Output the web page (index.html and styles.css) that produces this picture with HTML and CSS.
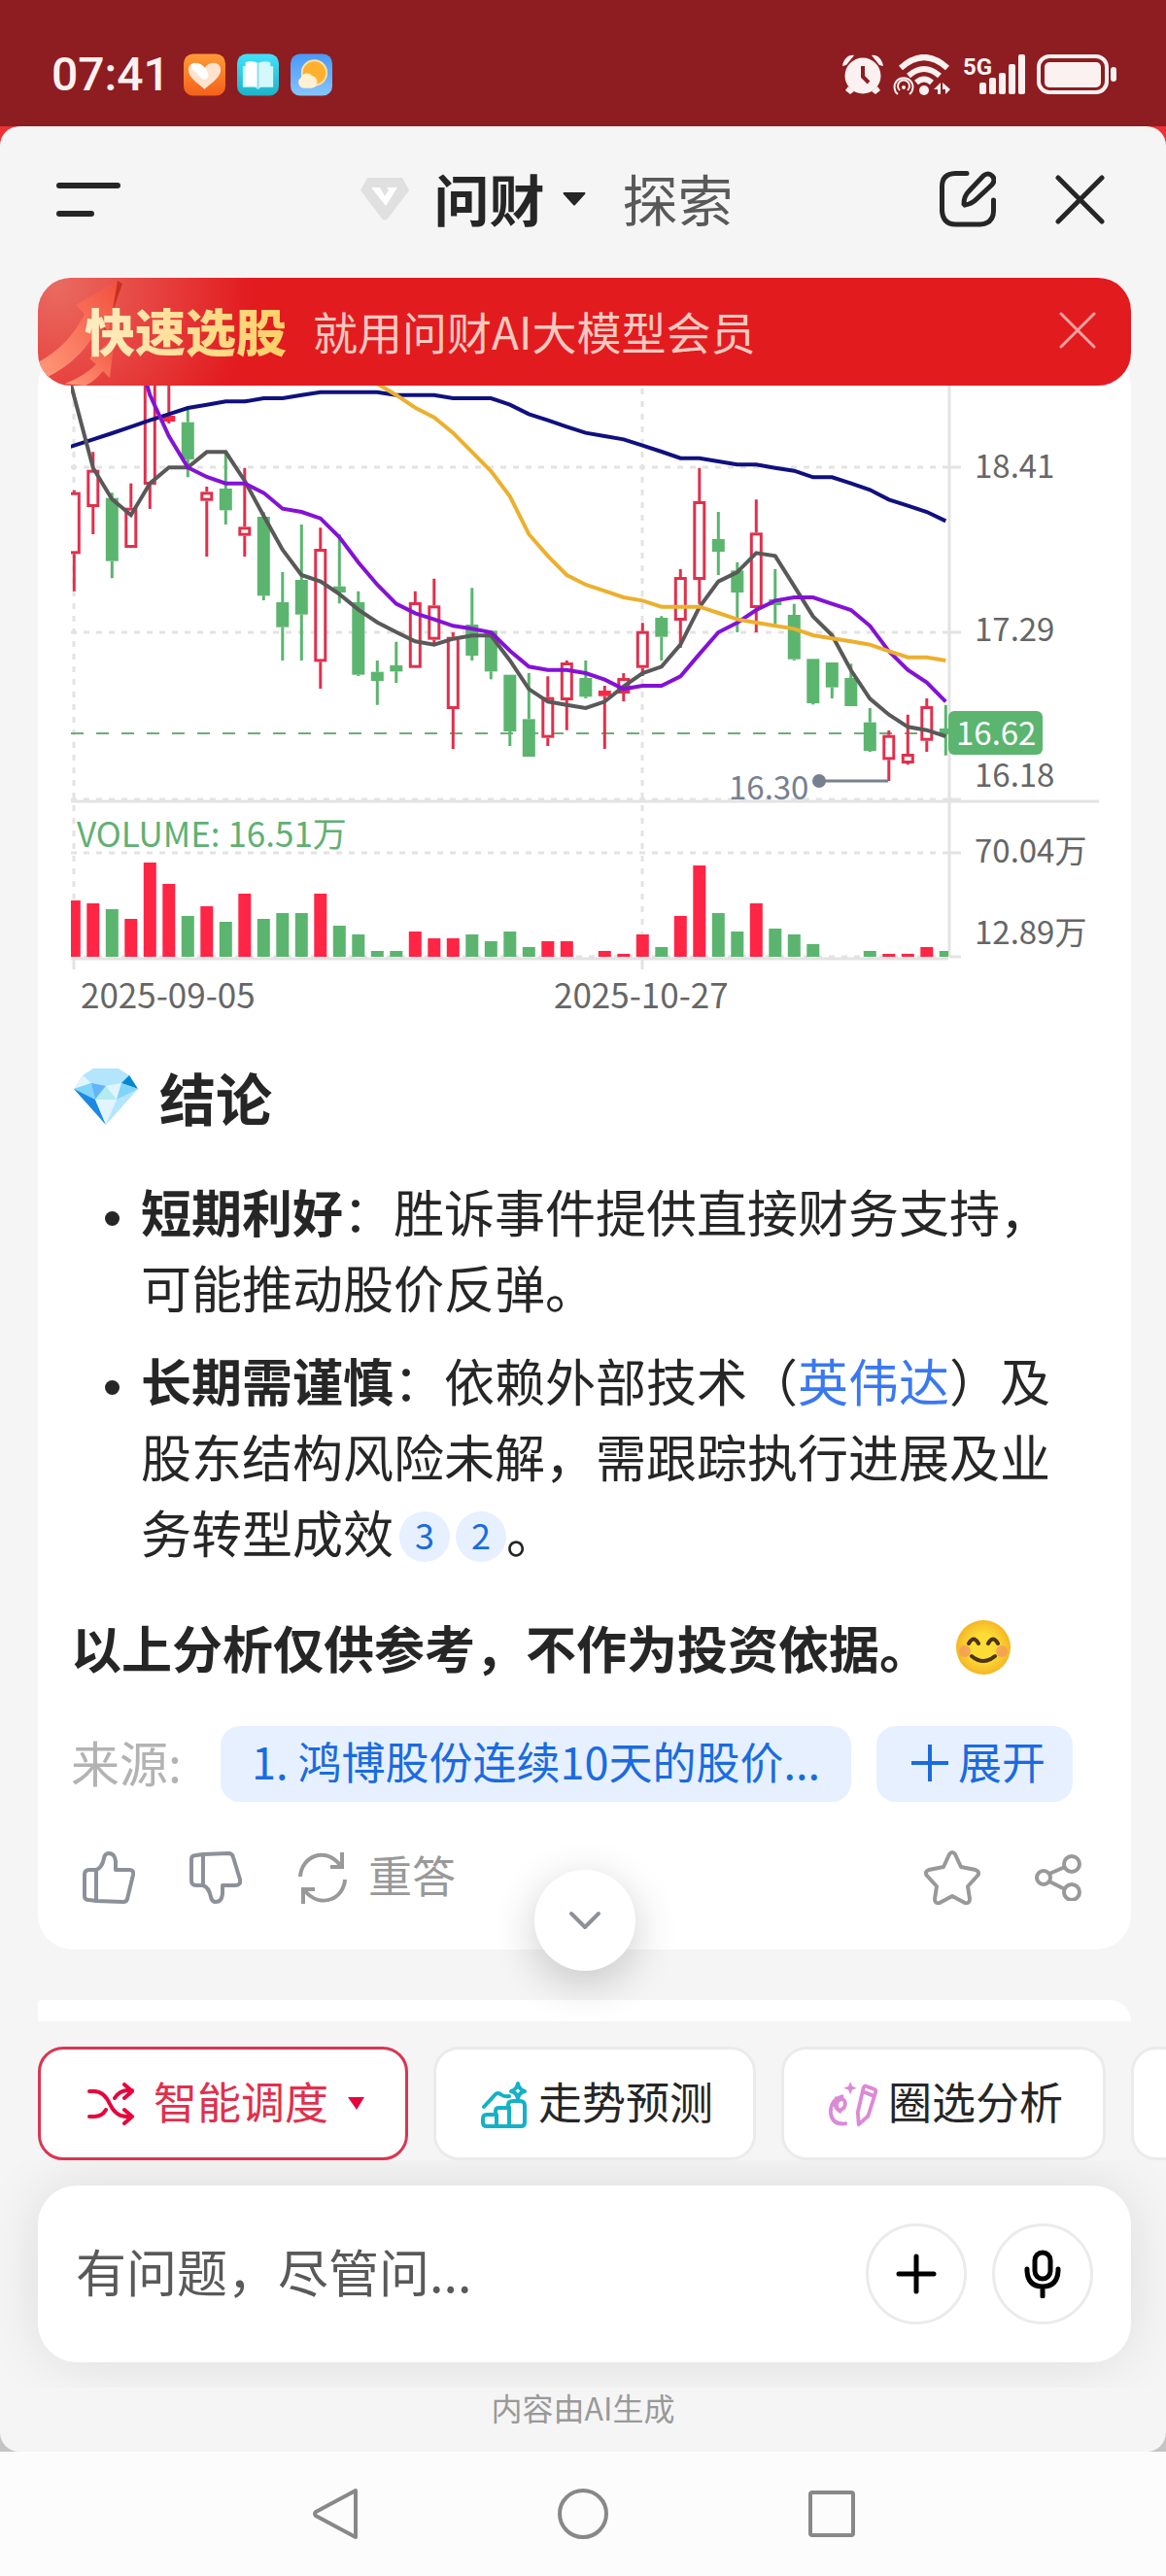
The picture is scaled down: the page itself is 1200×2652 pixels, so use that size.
FILE: index.html
```
<!DOCTYPE html>
<html lang="zh-CN">
<head>
    <meta charset="UTF-8">
    <meta name="viewport" content="width=device-width, initial-scale=1.0">
    <title>问财</title>
    <link rel="stylesheet" href="styles.css">
</head>
<body>
    <div class="status-bar">
        <span class="time">07:41</span>
        <svg class="app-icon" viewBox="0 0 44 44">
            <defs>
                <linearGradient id="orange" x1="0" y1="0" x2="0" y2="1"><stop offset="0" stop-color="#ff9a35"/><stop offset="1" stop-color="#f4611a"/></linearGradient>
                <linearGradient id="cyan" x1="0" y1="0" x2="0" y2="1"><stop offset="0" stop-color="#42e2fb"/><stop offset="1" stop-color="#1fb2c8"/></linearGradient>
                <linearGradient id="sky" x1="0" y1="0" x2="0" y2="1"><stop offset="0" stop-color="#4799f7"/><stop offset="1" stop-color="#86c4ff"/></linearGradient>
            </defs>
            <rect width="44" height="44" rx="10" fill="url(#orange)"/>
            <path d="M22 37C13 30 5 24 5 17c0-9 12-10 17-2 5-8 17-7 17 2 0 7-8 13-17 20z" fill="#ffe3cf"/>
            <path d="M8 11c7-4 17 3 18 11 0 6-6 6-9 2-4-5-9-6-9-13z" fill="#fff"/>
        </svg>
        <svg class="app-icon" viewBox="0 0 44 44">
            <rect width="44" height="44" rx="10" fill="url(#cyan)"/>
            <path d="M6 13h3V9c5-2 10-1 13 1 3-2 8-3 13-1v4h3v22H25l-3 2-3-2H6z" fill="#d5f8fc"/>
            <path d="M9 9c5-2 10-1 13 1v25c-4-2-9-2-13-1z" fill="#fff"/>
            <path d="M22 10v27" stroke="#8adfea" stroke-width="2"/>
        </svg>
        <svg class="app-icon" viewBox="0 0 44 44">
            <rect width="44" height="44" rx="10" fill="url(#sky)"/>
            <circle cx="25" cy="20" r="13" fill="#ffb02e" stroke="#ffe0a0" stroke-width="2"/>
            <path d="M14 36a6 6 0 0 1-3-11 7 7 0 0 1 12-2 7 7 0 0 1 5 7c0 4-3 6-6 6z" fill="#fff1d2"/>
        </svg>
        <div class="status-right">
            <svg width="42" height="42" viewBox="0 0 42 42" fill="#fbf1f1">
                <circle cx="21" cy="22" r="18.500"/>
                <path d="M0 12C1 5 6 0 12 1L4 11zM42 12C41 5 36 0 30 1l8 10zM6 33l6 5-4 3-5-4zM36 33l-6 5 4 3 5-4z"/>
                <path d="M21 12v11l6 6" fill="none" stroke="#8d1d20" stroke-width="4"/>
            </svg>
            <svg width="60" height="42" viewBox="0 0 60 42" fill="none" stroke="#fbf1f1" stroke-width="6">
                <path d="M8 14q24-22 48 0M16 22q16-14 32 0M24 29q8-7 16 0"/>
                <circle cx="32" cy="37" r="5" fill="#fbf1f1" stroke="none"/>
                <g stroke-width="2"><path d="M5 41a9.500 9.500 0 1 1 12 0M7 37a6 6 0 1 1 8 0"/><circle cx="11" cy="34" r="1"/></g>
                <path d="M42 36l7-7v12h-3v-5zM51 29l8 7-5 5V36h-3z" fill="#fbf1f1" stroke="none"/>
            </svg>
            <svg width="68" height="42" viewBox="0 0 68 42" fill="#fbf1f1">
                <text class="net" x="2" y="21">5G</text>
                <rect x="19" y="29" width="7" height="12" rx="2"/><rect x="29" y="24" width="7" height="17" rx="2"/><rect x="39" y="19" width="7" height="22" rx="2"/><rect x="49" y="10" width="7" height="31" rx="2"/><rect x="59" y="0" width="7" height="41" rx="2"/>
            </svg>
            <svg width="82" height="42" viewBox="0 0 82 42" fill="#fbf1f1">
                <rect x="2" y="2" width="70" height="37" rx="11" fill="none" stroke="#fbf1f1" stroke-width="4"/>
                <rect x="8" y="8" width="58" height="26" rx="5"/><rect x="76" y="13" width="6" height="15" rx="3"/>
            </svg>
        </div>
    </div>

    <main class="panel">
        <header class="top-bar">
            <button class="icon-btn" aria-label="菜单">
                <svg width="66" height="37" viewBox="0 0 66 37" stroke="#262626" stroke-width="6" stroke-linecap="round"><path d="M3 4h60M3 33h33"/></svg>
            </button>
            <nav class="tabs">
                <svg width="50" height="44" viewBox="0 0 50 44"><path d="M7 0h36l7 13-22 29q-3 3-6 0L0 13z" fill="#e0e0e0"/><path d="M11 10h9l5 9 4-6-2-3h11L26 29z" fill="#fff"/></svg>
                <a href="#" class="tab current">问财</a>
                <svg width="24" height="14" viewBox="0 0 24 14"><path d="M1 0h22q1 1 0 2L13 13q-1 1-2 0L1 2q-1-1 0-2z" fill="#262626"/></svg>
                <a href="#" class="tab">探索</a>
            </nav>
            <div class="top-actions">
                <button class="icon-btn" aria-label="新对话">
                    <svg width="58" height="58" viewBox="0 0 58 58" fill="none" stroke="#262626" stroke-width="5" stroke-linecap="round"><path d="M28 2.500H16Q2.500 3 2.500 16v25q1 14 14 14h25q14-1 14-14V30"/><path d="M25 34q0-8 5-13L45 5q5-4 9 0 4 4 0 9L38 29q-5 5-12 6z"/></svg>
                </button>
                <button class="icon-btn" aria-label="关闭">
                    <svg width="51" height="51" viewBox="0 0 51 51" stroke="#262626" stroke-width="5" stroke-linecap="round"><path d="M3 3l45 45M48 3L3 48"/></svg>
                </button>
            </div>
        </header>

        <section class="feed">
            <div class="banner">
                <svg class="banner-arrows" width="130" height="111" viewBox="0 0 130 111">
                    <defs><linearGradient id="arrow" x1="0" y1="1" x2="1" y2="0"><stop offset="0" stop-color="#ff9a7a"/><stop offset="1" stop-color="#f2503e"/></linearGradient></defs>
                    <path d="M6 104Q50 78 62 46l8 8L87 6l-5-3z" fill="#c7321f"/>
                    <path d="M0 87Q32 70 48 37l-9-9L82 3 73 56l-9-10Q48 84 8 103z" fill="url(#arrow)"/>
                    <path d="M28 109q20-8 32-20l-7-6 26-22-5 42-7-7q-8 10-18 15z" fill="url(#arrow)"/>
                </svg>
                <strong>快速选股</strong>
                <span>就用问财AI大模型会员</span>
                <button class="icon-btn banner-close" aria-label="关闭广告">
                    <svg width="38" height="38" viewBox="0 0 38 38" stroke="#f4a3a0" stroke-width="3" stroke-linecap="round"><path d="M2 2l34 34M36 2L2 36"/></svg>
                </button>
            </div>

            <article class="card">
                <svg class="chart" viewBox="0 0 1125 663" role="img" aria-label="K线图">
                    <defs>
                        <clipPath id="plot"><rect x="34" y="0" width="903" height="663"/></clipPath>
                        <clipPath id="priceArea"><rect x="0" y="0" width="1125" height="426"/></clipPath>
                    </defs>
                    <g class="grid">
                        <path class="dashed" d="M34 84H938M34 254H938M34 426H938M34 481H938M34 588H938M37 3V588M622 3V588"/>
                        <path d="M34 428H1092M34 590H937M938 0V588M938 84H950M938 254H950M938 426H950M938 481H950M938 588H950M37 590V601M622 590V601"/>
                    </g>
                    <path class="last-line" d="M34 358H937"/>
                    <g id="bars" clip-path="url(#plot)"></g>
                    <g id="lines" clip-path="url(#plot)"></g>
                    <g class="low-mark"><path d="M804 407H875"/><circle cx="804" cy="407" r="7"/><text x="711" y="426" clip-path="url(#priceArea)">16.30</text></g>
                    <rect class="last-tag" x="937" y="335" width="97" height="45" rx="6"/>
                    <text class="last-text" x="945" y="370">16.62</text>
                    <text x="964" y="95">18.41</text>
                    <text x="964" y="263">17.29</text>
                    <text x="964" y="413">16.18</text>
                    <text x="964" y="491">70.04万</text>
                    <text x="964" y="575">12.89万</text>
                    <text class="wide vol-text" x="40" y="475">VOLUME: 16.51万</text>
                    <text class="wide" x="44" y="641">2025-09-05</text>
                    <text class="wide" x="531" y="641">2025-10-27</text>
                </svg>

                <h2>
                    <svg width="66" height="58" viewBox="0 0 66 58">
                        <path d="M20 0h26l11 7 9 14-33 37L0 21 9 7z" fill="#b3e5fc"/>
                        <path d="M9 7L0 21l18-6z" fill="#e1f5fe"/><path d="M57 7l9 14-17-6z" fill="#0288d1"/>
                        <path d="M18 15L0 21l22 11z" fill="#81d4fa"/><path d="M18 15l15 3-11 14z" fill="#64b5f6"/><path d="M33 18l11 14H22z" fill="#b2ebf2"/><path d="M49 15L33 18l11 14z" fill="#e1f5fe"/><path d="M49 15l17 6-22 11z" fill="#81d4fa"/>
                        <path d="M0 21l22 11 11 26z" fill="#1e88e5"/><path d="M22 32h22L33 58z" fill="#e1f5fe"/>
                    </svg>
                    结论
                </h2>
                <ul>
                    <li><b>短期利好</b>：胜诉事件提供直接财务支持，可能推动股价反弹。</li>
                    <li><b>长期需谨慎</b>：依赖外部技术（<a href="#">英伟达</a>）及股东结构风险未解，需跟踪执行进展及业务转型成效<a href="#" class="cite">3</a><a href="#" class="cite">2</a>。</li>
                </ul>
                <p class="notice">以上分析仅供参考，不作为投资依据。
                    <svg width="58" height="58" viewBox="0 0 58 58">
                        <defs><radialGradient id="face"><stop offset="0.500" stop-color="#fddc35"/><stop offset="1" stop-color="#f5b625"/></radialGradient></defs>
                        <circle cx="29" cy="29" r="28" fill="url(#face)"/>
                        <circle cx="10" cy="33" r="6" fill="#f59a5c" opacity=".8"/><circle cx="48" cy="33" r="6" fill="#f59a5c" opacity=".8"/>
                        <path d="M14 25q5-9 10 0M34 25q5-9 10 0M17 38q12 10 24 0" fill="none" stroke="#4e3318" stroke-width="4" stroke-linecap="round"/>
                    </svg>
                </p>
                <div class="sources">
                    <span>来源:</span>
                    <a href="#" class="pill">1. 鸿博股份连续10天的股价...</a>
                    <button class="pill more"><svg width="38" height="38" viewBox="0 0 38 38" stroke="#1a6be0" stroke-width="4"><path d="M0 19h38M19 0v38"/></svg>展开</button>
                </div>
                <div class="actions">
                    <button class="icon-btn" aria-label="赞">
                        <svg width="54" height="54" viewBox="0 0 54 54" fill="none" stroke="#8c9199" stroke-width="4" stroke-linejoin="round"><path d="M14 19H7q-5 0-5 5v22q0 4 5 4l7 1 28 1q3 0 4-3l6-25q1-5-4-5H34V10q-1-8-7-8-4 0-5 5-2 10-8 12zM14 19v32"/></svg>
                    </button>
                    <button class="icon-btn" aria-label="踩">
                        <svg width="54" height="54" viewBox="0 0 54 54" fill="none" stroke="#8c9199" stroke-width="4" stroke-linejoin="round"><path d="M14 35H7q-5 0-5-5V8q0-4 5-4l7-1 26-1q4 0 5 4l7 23q1 6-5 6H34v9q-1 8-7 8-4 0-5-5-2-10-8-12zM14 35V3"/></svg>
                    </button>
                    <button class="icon-btn redo">
                        <svg width="50" height="54" viewBox="0 0 50 54" fill="none" stroke="#999" stroke-width="4"><path d="M2 26C3 6 27-6 43 14M45 1v15H33M48 29C47 48 24 60 7 41M5 54V39h12"/></svg>
                        <span>重答</span>
                    </button>
                    <div class="actions-right">
                        <button class="icon-btn" aria-label="收藏">
                            <svg width="58" height="56" viewBox="0 0 58 56" fill="none" stroke="#999" stroke-width="4" stroke-linejoin="round"><path d="M26 4q3-4 6 0l6 13 15 3q5 2 2 6L45 37l2 13q0 5-5 4l-13-7-13 7q-5 1-5-4l2-13L3 26q-3-4 2-6l15-3z"/></svg>
                        </button>
                        <button class="icon-btn" aria-label="分享">
                            <svg width="48" height="48" viewBox="0 0 48 48" fill="none" stroke="#999" stroke-width="4"><circle cx="9" cy="24" r="7"/><circle cx="38" cy="10" r="8"/><circle cx="38" cy="39" r="8"/><path d="M15 20l16-7M15 28l16 8"/></svg>
                        </button>
                    </div>
                </div>
                <button class="to-bottom" aria-label="回到底部">
                    <svg width="34" height="20" viewBox="0 0 34 20" fill="none" stroke="#8c9199" stroke-width="4" stroke-linecap="round" stroke-linejoin="round"><path d="M3 3l14 14L31 3"/></svg>
                </button>
            </article>
            <div class="next-card"></div>
        </section>

        <div class="chips">
            <button class="chip active">
                <svg width="48" height="44" viewBox="0 0 48 44" fill="none" stroke="#e6053c" stroke-width="4" stroke-linecap="round" stroke-linejoin="round"><path d="M2 9h5Q17 9 23 22t17 13h6M2 35h5q8 0 12-7M28 16q5-8 14-8h4M38 2l8 7-8 7M38 28l8 7-8 7"/></svg>
                <span>智能调度</span>
                <svg width="17" height="13" viewBox="0 0 17 13"><path d="M0 0h17L9 13z" fill="#e6053c"/></svg>
            </button>
            <button class="chip">
                <svg width="48" height="50" viewBox="0 0 48 50" fill="none" stroke="#14b1c8" stroke-width="4" stroke-linejoin="round" stroke-linecap="round"><path d="M2 44v-4q0-4 4-4h9v-4q0-3 4-3h9v-3q0-4 5-4h7q5 0 5 5v17q0 4-4 4H6q-4 0-4-4zM16 36v12M29 28v20M3 28l12-13q2-2 5 0 4 3 9 2"/><path d="M38 4q1 6 7 8-6 1-7 8-1-7-7-8 6-2 7-8z"/></svg>
                <span>走势预测</span>
            </button>
            <button class="chip">
                <svg width="50" height="50" viewBox="0 0 52 50" fill="none" stroke="#db8ad6" stroke-width="4" stroke-linejoin="round" stroke-linecap="round"><path d="M14 17Q1 21 2 35q2 13 16 11M8 19c-3 8 0 13 5 12 6-2 6-12 0-11-5 1-7 9-1 13"/><path d="M40 6l8 3q3 1 2 4L42 38l-10 9-1-13L37 8q1-3 3-2zM37 12l10 4"/><path d="M23 1l2 5 5 2-5 2-2 5-2-5-5-2 5-2z" fill="#db8ad6" stroke="none"/></svg>
                <span>圈选分析</span>
            </button>
            <button class="chip" aria-label="更多"></button>
        </div>

        <div class="composer">
            <div class="input-box">
                <input type="text" placeholder="有问题，尽管问..." aria-label="提问">
                <button class="round-btn" aria-label="添加">
                    <svg width="42" height="42" viewBox="0 0 42 42" stroke="#000" stroke-width="5" stroke-linecap="round"><path d="M3 21h36M21 3v36"/></svg>
                </button>
                <button class="round-btn" aria-label="语音">
                    <svg width="40" height="50" viewBox="0 0 40 50" fill="none" stroke="#000" stroke-width="5" stroke-linecap="round"><rect x="12" y="3" width="16" height="27" rx="8"/><path d="M4 20v2q1 16 16 16t16-16v-2M20 38v10"/></svg>
                </button>
            </div>
        </div>
        <p class="footnote">内容由AI生成</p>
    </main>

    <div class="nav-bar">
        <button class="icon-btn" aria-label="返回"><svg width="52" height="54" viewBox="0 0 52 54" fill="none" stroke="#888" stroke-width="4" stroke-linejoin="round"><path d="M48 3v48L7 29q-2-2 0-4z"/></svg></button>
        <button class="icon-btn" aria-label="主页"><svg width="52" height="54" viewBox="0 0 52 54" fill="none" stroke="#888" stroke-width="4"><circle cx="26" cy="27" r="24"/></svg></button>
        <button class="icon-btn" aria-label="最近任务"><svg width="52" height="54" viewBox="0 0 52 54" fill="none" stroke="#888" stroke-width="4"><rect x="4" y="5" width="44" height="44" rx="2"/></svg></button>
    </div>

    <script>
        // one row per day: colour (r = hollow, R = solid red, g = green), high, body top, body bottom, low, volume
        // levels are counted down from the top of the plot, three to a unit
        var days = [
            ["r", 344, 350, 541, 656, 58], ["r", 226, 281, 396, 480, 55], ["g", 352, 368, 563, 616, 49],
            ["r", 323, 398, 522, 522, 39], ["r", 0, 0, 327, 402, 97], ["R", 0, 114, 132, 138, 75],
            ["g", 92, 134, 249, 304, 42], ["r", 333, 349, 377, 549, 52], ["g", 226, 339, 406, 450, 36],
            ["r", 275, 457, 485, 549, 65], ["g", 412, 426, 670, 684, 39], ["g", 597, 690, 767, 870, 45],
            ["g", 450, 621, 728, 870, 45], ["r", 460, 525, 874, 957, 65], ["g", 480, 641, 660, 694, 32],
            ["g", 656, 690, 914, 918, 23], ["g", 870, 905, 933, 1007, 6], ["g", 812, 885, 904, 939, 6],
            ["r", 656, 690, 893, 893, 26], ["r", 617, 700, 806, 822, 19], ["r", 783, 797, 1020, 1143, 19],
            ["g", 646, 759, 855, 870, 23], ["g", 778, 778, 904, 928, 16], ["g", 914, 914, 1089, 1134, 26],
            ["g", 909, 1051, 1167, 1167, 10], ["r", 919, 983, 1109, 1134, 16], ["r", 870, 876, 993, 1085, 16],
            ["g", 870, 924, 982, 987, 0], ["R", 948, 963, 980, 1143, 6], ["r", 909, 924, 972, 996, 3],
            ["r", 754, 779, 893, 918, 23], ["g", 733, 738, 797, 870, 10], ["r", 588, 612, 747, 831, 42],
            ["r", 275, 378, 621, 695, 94], ["g", 411, 495, 534, 606, 45], ["g", 567, 592, 660, 783, 26],
            ["r", 373, 475, 708, 783, 55], ["g", 588, 681, 699, 763, 29], ["g", 695, 729, 866, 870, 23],
            ["g", 865, 865, 1002, 1006, 13], ["g", 876, 876, 953, 987, 0], ["g", 880, 924, 1011, 1011, 0],
            ["g", 1017, 1061, 1149, 1152, 6], ["r", 1086, 1100, 1177, 1242, 3], ["r", 1037, 1158, 1188, 1192, 3],
            ["r", 987, 1011, 1118, 1152, 10], ["g", 1007, 1080, 1098, 1163, 6]
        ];
        // moving averages: css class, index of the first day, levels
        var averages = [
            ["ma-long", 0, [206, 187, 168, 148, 128, 109, 90, 80, 70, 70, 60, 60, 50, 41, 41, 41, 41, 50, 50, 50, 60, 60, 60, 80, 109, 128, 148, 167, 177, 187, 206, 225, 245, 245, 255, 265, 265, 275, 284, 304, 304, 323, 343, 373, 392, 411, 439]],
            ["ma-short", 0, [55, 275, 372, 421, 323, 274, 274, 226, 226, 315, 423, 528, 606, 626, 665, 713, 752, 782, 811, 821, 803, 793, 793, 870, 958, 997, 1007, 1017, 997, 950, 909, 889, 821, 705, 626, 597, 538, 547, 640, 734, 792, 900, 988, 1037, 1075, 1085, 1104]],
            ["ma-mid", 3, [-150, 50, 177, 274, 303, 323, 323, 352, 401, 411, 431, 489, 567, 636, 695, 724, 743, 763, 772, 783, 840, 889, 899, 899, 909, 929, 958, 948, 948, 919, 850, 783, 753, 714, 685, 675, 675, 695, 714, 763, 841, 899, 938, 997]],
            ["ma-slow", 16, [15, 50, 89, 119, 167, 226, 285, 363, 480, 547, 606, 636, 655, 675, 685, 704, 704, 704, 723, 743, 753, 763, 772, 792, 802, 811, 821, 841, 860, 860, 870]]
        ];
        var volumeBase = 588;

        function x(i) {
            return 37.3 + i * 19.5;
        }

        function y(level) {
            return level / 3 - 7;
        }

        function draw(parent, tag, attrs) {
            var el = document.createElementNS("http://www.w3.org/2000/svg", tag);
            for (var key in attrs) el.setAttribute(key, attrs[key]);
            parent.appendChild(el);
        }

        var bars = document.getElementById("bars");
        days.forEach(function (d, i) {
            var cls = d[0] == "g" ? "down" : "up";
            var inset = d[0] == "r" ? 1.5 : 0;
            draw(bars, "path", {
                class: "wick " + cls,
                d: "M" + x(i) + " " + y(d[1]) + "V" + y(d[2]) + "M" + x(i) + " " + y(d[3]) + "V" + y(d[4])
            });
            draw(bars, "rect", {
                class: d[0] == "r" ? "hollow" : "solid " + cls,
                x: x(i) - 6.5 + inset,
                y: y(d[2]) + inset,
                width: 13 - inset * 2,
                height: (d[3] - d[2]) / 3 - inset * 2
            });
            draw(bars, "rect", { class: "solid " + cls, x: x(i) - 6.5, y: volumeBase - d[5], width: 13, height: d[5] });
        });

        var lines = document.getElementById("lines");
        averages.forEach(function (a) {
            var points = a[2].map(function (level, i) {
                return x(a[1] + i) + "," + y(level);
            });
            // run the lines that begin on day one out to the plot edge
            if (a[1] == 0) points.unshift(x(-1) + "," + y(a[2][0] * 2 - a[2][1]));
            draw(lines, "polyline", { class: a[0], points: points.join(" ") });
        });
    </script>
</body>
</html>
```

FILE: styles.css
```
* {
    margin: 0;
    padding: 0;
    box-sizing: border-box;
}

body {
    min-height: 100vh;
    display: flex;
    flex-direction: column;
    background: #fcfcfc;
    color: #262626;
    font-family: "Noto Sans CJK SC", "Noto Sans", sans-serif;
    font-size: 52px;
    line-height: 78px;
}

a {
    color: #3a78f2;
    text-decoration: none;
}

svg {
    display: block;
    flex-shrink: 0;
}

button {
    font: inherit;
    color: inherit;
    border: none;
    background: none;
    cursor: pointer;
    white-space: nowrap;
}

.icon-btn {
    display: flex;
    align-items: center;
}

/* status bar */
.status-bar {
    display: flex;
    align-items: center;
    gap: 12px;
    padding: 38px 51px 14px 53px;
    background: #8d1d20;
    color: #fbf1f1;
}

.time {
    font-family: Roboto, "Noto Sans", sans-serif;
    font-size: 48px;
    font-weight: 500;
    margin-right: 2px;
}

.app-icon {
    width: 43px;
    height: 44px;
}

.status-right {
    display: flex;
    gap: 10px;
    margin-left: auto;
}

.net {
    font-family: Roboto, sans-serif;
    font-size: 24px;
    font-weight: 700;
}

/* main panel */
.panel {
    flex: 1;
    background: #f5f5f5;
    border-radius: 20px;
    box-shadow: 0 -20px 0 #ee3034, 0 20px 0 #c4c4c4;
    clip-path: inset(0);
    overflow: hidden;
}

.top-bar {
    display: flex;
    align-items: center;
    justify-content: space-between;
    padding: 36px 63px 42px 58px;
}

.tabs {
    display: flex;
    align-items: center;
    gap: 18px;
    margin-left: 34px;
}

.tab {
    padding-bottom: 4px;
    color: #595959;
    font-size: 57px;
    line-height: 74px;
}

.tab:last-child {
    margin-left: 20px;
}

.tab.current {
    color: #262626;
    font-weight: 700;
    margin-left: 8px;
}

.top-actions {
    display: flex;
    gap: 61px;
}

.feed {
    padding: 0 36px 0 39px;
}

.banner {
    position: relative;
    z-index: 1;
    display: flex;
    align-items: center;
    height: 111px;
    padding: 0 36px 3px 48px;
    border-radius: 34px;
    overflow: hidden;
    background: radial-gradient(circle at 20px 10px, #ea6a60, #e21b1f 200px);
    color: #fbc9c0;
    font-size: 46px;
}

.banner-arrows {
    position: absolute;
    left: 0;
    top: 0;
}

.banner strong {
    position: relative;
    margin-right: 27px;
    font-size: 52px;
    font-weight: 900;
    background: linear-gradient(90deg, #ffedc4, #ffcf66);
    -webkit-background-clip: text;
    background-clip: text;
    color: transparent;
}

.banner-close {
    margin-left: auto;
}

/* answer card */
.card {
    position: relative;
    margin-top: -36px;
    padding: 36px 34px 44px;
    background: #fff;
    border-radius: 36px;
}

.chart {
    width: calc(100% + 68px);
    margin: 0 -34px;
    font-size: 33px;
    fill: #666;
}

.wide {
    font-size: 35px;
}

.grid path {
    fill: none;
    stroke: #e3e3e3;
    stroke-width: 3px;
}

.grid .dashed {
    stroke-dasharray: 6 7;
}

.last-line {
    stroke: #6cae7c;
    stroke-width: 2px;
    stroke-dasharray: 13 13;
}

.wick {
    stroke-width: 3px;
}

.wick.up {
    stroke: #e0304c;
}

.wick.down {
    stroke: #5bb56f;
}

.hollow {
    fill: #fff;
    stroke: #e0304c;
    stroke-width: 3px;
}

.solid.up {
    fill: #ff2545;
}

.solid.down {
    fill: #5bb56f;
}

#lines polyline {
    fill: none;
    stroke-width: 4px;
}

#lines .ma-short {
    stroke: #595959;
}

#lines .ma-mid {
    stroke: #8412d6;
}

#lines .ma-slow {
    stroke: #ecb02e;
}

#lines .ma-long {
    stroke: #101080;
}

.low-mark {
    fill: #76808f;
}

.low-mark path {
    stroke: #76808f;
    stroke-width: 3px;
}

.last-tag {
    fill: #5bb56f;
}

.last-text {
    fill: #fff;
}

.vol-text {
    fill: #5fb073;
}

h2 {
    display: flex;
    align-items: center;
    gap: 22px;
    margin: 30px 0 40px;
    padding-left: 3px;
    font-size: 58px;
    font-weight: 700;
}

ul {
    padding-left: 72px;
}

li + li {
    margin-top: 18px;
}

li::marker {
    font-size: 40px;
}

.cite {
    display: inline-block;
    width: 52px;
    height: 52px;
    margin-left: 6px;
    border-radius: 50%;
    background: #e6f0ff;
    color: #1a6be0;
    font-size: 36px;
    line-height: 47px;
    text-align: center;
    vertical-align: 4px;
}

.notice {
    display: flex;
    align-items: center;
    gap: 26px;
    margin: 41px 0 42px;
    font-weight: 700;
}

.sources {
    display: flex;
    align-items: center;
    gap: 26px;
    color: #b3b3b3;
    font-size: 50px;
}

.sources span {
    margin-right: 14px;
    padding-bottom: 6px;
    line-height: 72px;
}

.pill {
    display: flex;
    align-items: center;
    gap: 10px;
    padding: 0 32px 6px;
    border-radius: 20px;
    background: #e6f0ff;
    color: #1a6be0;
    font-size: 45px;
    line-height: 72px;
    white-space: nowrap;
}

.more {
    padding: 0 28px 6px 36px;
}

.more svg {
    margin-top: 4px;
}

.actions {
    display: flex;
    align-items: center;
    gap: 56px;
    height: 60px;
    margin-top: 48px;
    padding: 0 17px 0 12px;
    color: #999;
    font-size: 45px;
}

.redo {
    gap: 22px;
    padding-left: 2px;
}

.redo span,
.chip span {
    padding-bottom: 6px;
}

.actions-right {
    display: flex;
    align-items: center;
    gap: 56px;
    margin-left: auto;
}

.to-bottom {
    position: absolute;
    left: calc(50% - 52px);
    bottom: -22px;
    z-index: 1;
    width: 104px;
    height: 104px;
    display: flex;
    align-items: center;
    justify-content: center;
    border-radius: 50%;
    background: #fff;
    box-shadow: 0 12px 45px rgba(0, 0, 0, 0.2);
}

.next-card {
    height: 22px;
    margin-top: 52px;
    background: #fff;
    border-radius: 6px 34px 0 0;
}

/* tools and composer */
.chips {
    display: flex;
    gap: 26px;
    padding: 26px 0 0 39px;
    overflow: hidden;
    position: relative;
    z-index: 1;
    background: #f5f5f5;
}

.chip {
    display: flex;
    flex-shrink: 0;
    align-items: center;
    gap: 11px;
    height: 117px;
    padding: 0 41px 0 46px;
    border: 3px solid #ebebeb;
    border-radius: 26px;
    background: #fff;
    font-size: 45px;
}

.chip.active {
    gap: 20px;
    padding: 0 42px 0 48px;
    border-color: #d93652;
    color: #e0304c;
}

.composer {
    padding: 26px 36px 26px 39px;
    overflow: hidden;
}

.input-box {
    display: flex;
    align-items: center;
    gap: 26px;
    padding: 39px;
    border-radius: 40px;
    background: #fff;
    box-shadow: 0 0 60px rgba(0, 0, 0, 0.1);
}

.input-box input {
    flex: 1;
    min-width: 0;
    padding-bottom: 6px;
    border: none;
    outline: none;
    background: none;
    color: #262626;
    font: inherit;
}

.input-box input::placeholder {
    color: #595959;
}

.round-btn {
    display: flex;
    align-items: center;
    justify-content: center;
    width: 104px;
    height: 104px;
    border: 3px solid #ebebeb;
    border-radius: 50%;
}

.footnote {
    padding-bottom: 26px;
    color: #999;
    font-size: 32px;
    line-height: 40px;
    text-align: center;
}

/* system navigation */
.nav-bar {
    display: flex;
    justify-content: center;
    gap: 204px;
    padding: 37px 0;
}
```
